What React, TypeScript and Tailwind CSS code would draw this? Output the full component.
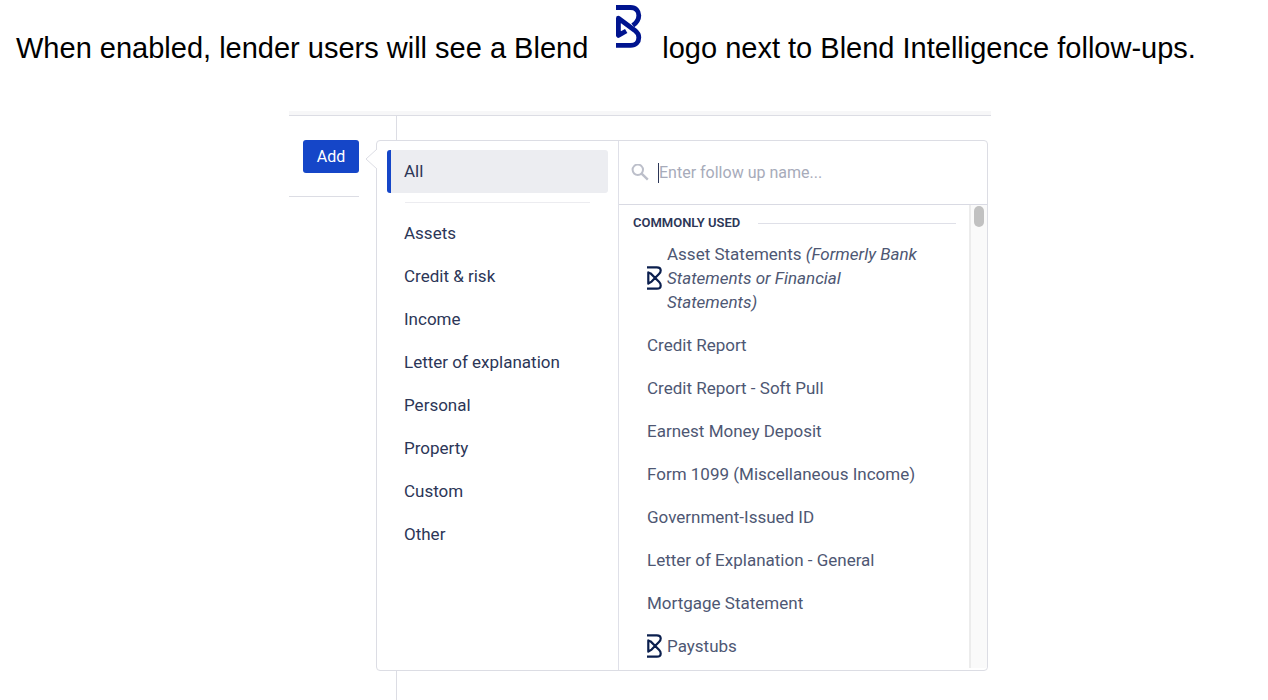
const categories = [
	"Assets",
	"Credit & risk",
	"Income",
	"Letter of explanation",
	"Personal",
	"Property",
	"Custom",
	"Other",
]

interface FollowUp {
	name: string
	note?: string
	intelligence?: boolean
}

const followUps: FollowUp[] = [
	{ name: "Asset Statements", note: "(Formerly Bank Statements or Financial Statements)", intelligence: true },
	{ name: "Credit Report" },
	{ name: "Credit Report - Soft Pull" },
	{ name: "Earnest Money Deposit" },
	{ name: "Form 1099 (Miscellaneous Income)" },
	{ name: "Government-Issued ID" },
	{ name: "Letter of Explanation - General" },
	{ name: "Mortgage Statement" },
	{ name: "Paystubs", intelligence: true },
]

function BlendLogo({ className }: { className: string }) {
	return (
		<svg viewBox="0 0 26 43" className={className} fill="none" stroke="currentColor" strokeWidth="4.8" strokeLinejoin="round" aria-hidden="true">
			<path d="M0 2.5H14.5C20 2.5 22.8 6 22.8 10.4C22.8 14.4 20.8 17.4 16.8 20.4" />
			<path d="M10.2 26L2.4 30.4V13.2L18.6 25.2C21.4 27.4 22.8 29.4 22.8 32.4C22.8 37 20 40.4 14.5 40.4H0" />
		</svg>
	)
}

function BlendMark({ className }: { className: string }) {
	return (
		<svg viewBox="0 0 15 24" className={className} fill="none" stroke="currentColor" strokeWidth="2.2" strokeLinejoin="round" aria-hidden="true">
			<path d="M0 1.3H9.8C12.4 1.3 13.7 2.6 13.7 4.6C13.7 6 13.2 6.8 12.2 7.8L4.6 15.6L1.3 17.6V6.4L3.6 7.4L12.2 16C13.2 17 13.7 17.8 13.7 19.4C13.7 21.4 12.4 22.7 9.8 22.7H0" />
		</svg>
	)
}

function SearchIcon() {
	return (
		<svg viewBox="0 0 18 18" className="h-[18px] w-[18px] shrink-0 text-[#bcbfca]" fill="none" stroke="currentColor" strokeWidth="2" aria-hidden="true">
			<circle cx="6.8" cy="5.8" r="5.2" />
			<path d="M10.6 9.6L16.8 15.6" strokeWidth="2.4" />
		</svg>
	)
}

function CategoryList() {
	return (
		<nav className="w-[242px] shrink-0 border-r border-[#dfe0e8] px-[10px] pt-[9px] text-[17px] text-[#2c3657]">
			<button className="flex h-[43px] w-full items-center rounded-[3px] border-l-4 border-[#1546c8] bg-[#ecedf1] px-[13px]">
				All
			</button>
			<hr className="mx-[18px] my-[9px] border-[#ececf0]" />
			{categories.map((category) => (
				<button key={category} className="flex h-[43px] w-full items-center px-[17px]">
					{category}
				</button>
			))}
		</nav>
	)
}

function FollowUpList() {
	return (
		<div className="flex min-w-0 flex-1 flex-col">
			<div className="flex h-[63px] items-center gap-[9px] px-3">
				<SearchIcon />
				<div className="flex flex-1 items-center">
					<span className="h-[20px] w-px bg-[#2c3657]" />
					<input
						type="text"
						aria-label="Follow up name"
						placeholder="Enter follow up name..."
						className="h-8 w-full min-w-0 bg-transparent outline-none placeholder:text-[#a7abba]"
					/>
				</div>
			</div>
			<div className="mb-[2px] flex flex-1 border-t border-[#d9dae3]">
				<div className="flex-1 text-[#4e5773]">
					<div className="flex h-7 items-center gap-[18px] pt-2 pr-[13px] pl-[14px]">
						<h2 className="text-[13px] leading-5 font-semibold text-[#2c3657]">COMMONLY USED</h2>
						<span className="h-px flex-1 bg-[#dfe0e8]" />
					</div>
					<ul className="text-[17px]">
						{followUps.map((item) => (
							<li key={item.name}>
								<button className="flex min-h-[43px] w-full items-center gap-[5px] py-[9px] pr-10 pl-7 text-left leading-6">
									{item.intelligence && <BlendMark className="h-6 w-[15px] shrink-0 text-[#0b1f4e]" />}
									<span>
										{item.name} {item.note && <em>{item.note}</em>}
									</span>
								</button>
							</li>
						))}
					</ul>
				</div>
				<div className="w-[18px] border-l-2 border-[#ececec] bg-[#fafafa] px-[3px] py-px">
					<div className="h-[21px] w-[10px] rounded-full bg-[#c1c1c1]" />
				</div>
			</div>
		</div>
	)
}

export default function App() {
	return (
		<main className="min-h-screen bg-white">
			<p className="flex h-[111px] items-start px-4 pt-[5px] font-['Liberation_Sans',Arial,sans-serif] text-[29px] leading-[34px] text-black">
				<span className="mt-[26px]">When enabled, lender users will see a Blend</span>
				<BlendLogo className="mr-5 ml-[28px] h-[43px] w-[26px] shrink-0 text-[#00148f]" />
				<span className="mt-[26px]">logo next to Blend Intelligence follow-ups.</span>
			</p>

			<div className="flex justify-center pl-3 font-[Roboto,sans-serif] text-base">
				<section className="relative w-full max-w-[702px] pb-[29px]">
					<div className="h-[5px] border-b border-[#dcdde4] bg-[#f7f7f8]" />
					<div className="absolute top-[5px] bottom-0 left-[107px] w-px bg-[#dcdde4]" />
					<div className="flex pt-6 pr-[3px]">
						<div className="w-[87px] shrink-0">
							<div className="mr-[17px] border-b border-[#dcdde4] pb-[23px] pl-[14px]">
								<button className="h-[33px] w-14 rounded-[3px] bg-[#1546c8] text-white">Add</button>
							</div>
						</div>
						<div className="relative flex h-[531px] flex-1 rounded-[4px] border border-[#dcdde4] bg-white">
							<svg viewBox="0 0 12 20" className="absolute top-2 -left-3 h-5 w-3" aria-hidden="true">
								<path d="M12 0L1 10L12 20" fill="white" stroke="#dcdde4" />
							</svg>
							<CategoryList />
							<FollowUpList />
						</div>
					</div>
				</section>
			</div>
		</main>
	)
}
